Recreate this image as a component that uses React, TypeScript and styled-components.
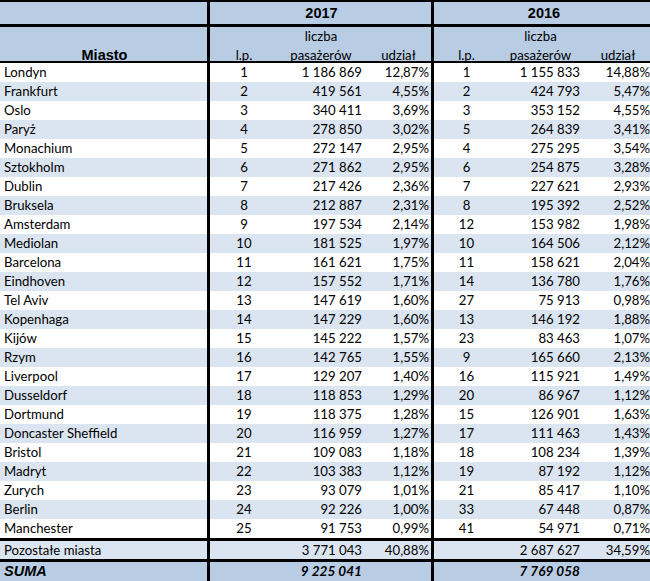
import React from "react";
import styled, { createGlobalStyle, css } from "styled-components";

const GlobalStyle = createGlobalStyle`
  html, body { margin: 0; padding: 0; background: #ffffff; overflow: hidden; }
  body { width: 650px; height: 581px; }
  * { box-sizing: border-box; }
`;

const HEADER_BG = "#b8cce4";
const STRIPE_BG = "#dbe5f1";

const Sheet = styled.div`
  width: 652px;
  border-top: 2px solid #000;
  font-family: Lato, "Noto Sans", sans-serif;
  font-size: 13.2px;
  color: #000;
`;

const Row = styled.div<{ $bg: string; $h: number; $rule?: number }>`
  display: grid;
  grid-template-columns: 207px 69px 88px 67px 66px 85px 70px;
  height: ${(p) => p.$h + (p.$rule ?? 0)}px;
  background: ${(p) => p.$bg};
  border-top: ${(p) => p.$rule ?? 0}px solid #000;
`;

type Align = "left" | "center" | "right";

const Cell = styled.div<{ $align?: Align; $divider?: boolean; $span?: number; $bottom?: boolean }>`
  display: flex;
  flex-direction: column;
  justify-content: ${(p) => (p.$bottom ? "flex-end" : "center")};
  align-items: ${(p) =>
    p.$align === "right" ? "flex-end" : p.$align === "center" ? "center" : "flex-start"};
  padding: 0 2px ${(p) => (p.$bottom ? "1px" : "0")} 4px;
  line-height: 19px;
  white-space: nowrap;
  ${(p) => p.$span && css`grid-column: span ${p.$span};`}
  ${(p) => p.$divider && css`border-left: 3px solid #000;`}
`;

const YearLabel = styled.span`
  font-family: "Liberation Sans", Arial, sans-serif;
  font-weight: bold;
  font-size: 14.5px;
  padding-top: 1px;
`;

const HeadLabel = styled.span`
  font-family: "Liberation Sans", Arial, sans-serif;
  font-weight: bold;
  font-size: 14.5px;
  line-height: 19px;
`;

const SumLabel = styled.span`
  font-family: "Liberation Sans", Arial, sans-serif;
  font-weight: bold;
  font-style: italic;
  font-size: 14.5px;
`;

const SumValue = styled.span`
  font-weight: bold;
  font-style: italic;
  font-size: 13.6px;
`;

const SubHead = styled.span`
  text-align: center;
  line-height: 19px;
`;

type Rec = [string, string, string, string, string, string, string];

const data: Rec[] = [
  ["Londyn", "1", "1 186 869", "12,87%", "1", "1 155 833", "14,88%"],
  ["Frankfurt", "2", "419 561", "4,55%", "2", "424 793", "5,47%"],
  ["Oslo", "3", "340 411", "3,69%", "3", "353 152", "4,55%"],
  ["Paryż", "4", "278 850", "3,02%", "5", "264 839", "3,41%"],
  ["Monachium", "5", "272 147", "2,95%", "4", "275 295", "3,54%"],
  ["Sztokholm", "6", "271 862", "2,95%", "6", "254 875", "3,28%"],
  ["Dublin", "7", "217 426", "2,36%", "7", "227 621", "2,93%"],
  ["Bruksela", "8", "212 887", "2,31%", "8", "195 392", "2,52%"],
  ["Amsterdam", "9", "197 534", "2,14%", "12", "153 982", "1,98%"],
  ["Mediolan", "10", "181 525", "1,97%", "10", "164 506", "2,12%"],
  ["Barcelona", "11", "161 621", "1,75%", "11", "158 621", "2,04%"],
  ["Eindhoven", "12", "157 552", "1,71%", "14", "136 780", "1,76%"],
  ["Tel Aviv", "13", "147 619", "1,60%", "27", "75 913", "0,98%"],
  ["Kopenhaga", "14", "147 229", "1,60%", "13", "146 192", "1,88%"],
  ["Kijów", "15", "145 222", "1,57%", "23", "83 463", "1,07%"],
  ["Rzym", "16", "142 765", "1,55%", "9", "165 660", "2,13%"],
  ["Liverpool", "17", "129 207", "1,40%", "16", "115 921", "1,49%"],
  ["Dusseldorf", "18", "118 853", "1,29%", "20", "86 967", "1,12%"],
  ["Dortmund", "19", "118 375", "1,28%", "15", "126 901", "1,63%"],
  ["Doncaster Sheffield", "20", "116 959", "1,27%", "17", "111 463", "1,43%"],
  ["Bristol", "21", "109 083", "1,18%", "18", "108 234", "1,39%"],
  ["Madryt", "22", "103 383", "1,12%", "19", "87 192", "1,12%"],
  ["Zurych", "23", "93 079", "1,01%", "21", "85 417", "1,10%"],
  ["Berlin", "24", "92 226", "1,00%", "33", "67 448", "0,87%"],
  ["Manchester", "25", "91 753", "0,99%", "41", "54 971", "0,71%"],
];

export default function App() {
  return (
    <>
      <GlobalStyle />
      <Sheet>
        <Row $bg={HEADER_BG} $h={22}>
          <Cell />
          <Cell $span={3} $divider $align="center">
            <YearLabel>2017</YearLabel>
          </Cell>
          <Cell $span={3} $divider $align="center">
            <YearLabel>2016</YearLabel>
          </Cell>
        </Row>
        <Row $bg={HEADER_BG} $h={34} $rule={3}>
          <Cell $align="center" $bottom>
            <HeadLabel>Miasto</HeadLabel>
          </Cell>
          <Cell $align="center" $bottom $divider>l.p.</Cell>
          <Cell $align="center" $bottom>
            <SubHead>liczba</SubHead>
            <SubHead>pasażerów</SubHead>
          </Cell>
          <Cell $align="center" $bottom>udział</Cell>
          <Cell $align="center" $bottom $divider>l.p.</Cell>
          <Cell $align="center" $bottom>
            <SubHead>liczba</SubHead>
            <SubHead>pasażerów</SubHead>
          </Cell>
          <Cell $align="center" $bottom>udział</Cell>
        </Row>
        {data.map((r, i) => (
          <Row key={r[0]} $bg={i % 2 === 0 ? "#ffffff" : STRIPE_BG} $h={19} $rule={i === 0 ? 2 : 0}>
            <Cell>{r[0]}</Cell>
            <Cell $align="center" $divider>{r[1]}</Cell>
            <Cell $align="right">{r[2]}</Cell>
            <Cell $align="right">{r[3]}</Cell>
            <Cell $align="center" $divider>{r[4]}</Cell>
            <Cell $align="right">{r[5]}</Cell>
            <Cell $align="right">{r[6]}</Cell>
          </Row>
        ))}
        <Row $bg={STRIPE_BG} $h={18} $rule={3}>
          <Cell>Pozostałe miasta</Cell>
          <Cell $divider />
          <Cell $align="right">3 771 043</Cell>
          <Cell $align="right">40,88%</Cell>
          <Cell $divider />
          <Cell $align="right">2 687 627</Cell>
          <Cell $align="right">34,59%</Cell>
        </Row>
        <Row $bg={HEADER_BG} $h={19} $rule={3}>
          <Cell>
            <SumLabel>SUMA</SumLabel>
          </Cell>
          <Cell $divider />
          <Cell $align="right">
            <SumValue>9 225 041</SumValue>
          </Cell>
          <Cell />
          <Cell $divider />
          <Cell $align="right">
            <SumValue>7 769 058</SumValue>
          </Cell>
          <Cell />
        </Row>
      </Sheet>
    </>
  );
}
